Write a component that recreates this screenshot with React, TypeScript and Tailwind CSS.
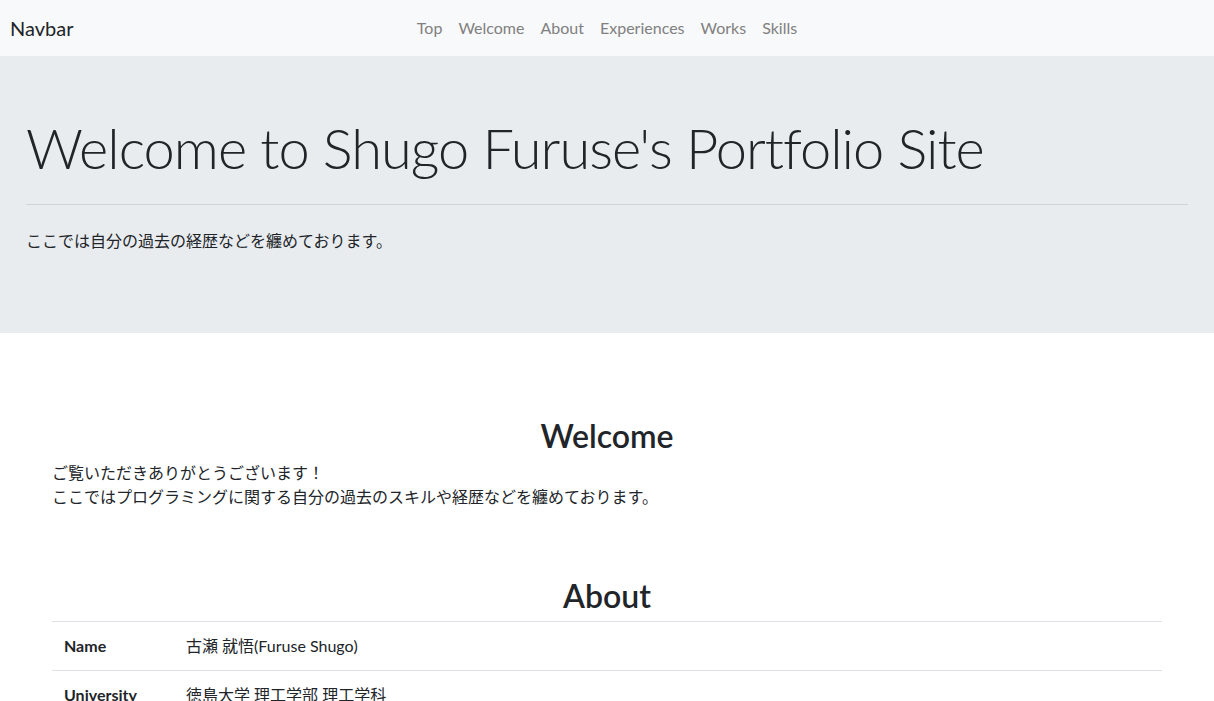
import React from "react";

export default function App() {
  const links = ["Top", "Welcome", "About", "Experiences", "Works", "Skills"];
  return (
    <div className="min-h-screen bg-white text-[#212529] [font-family:'Lato','Noto_Sans_CJK_JP',sans-serif]">
      <nav className="h-14 bg-[#f8f9fa] grid grid-cols-[1fr_auto_1fr] items-center px-[10px]">
        <div className="text-[20px] leading-[30px] text-[#212529]">Navbar</div>
        <ul className="flex items-center gap-4 text-[16px] text-[#808080]">
          {links.map((l) => (
            <li key={l}>{l}</li>
          ))}
        </ul>
        <div />
      </nav>

      <header className="h-[277px] bg-[#e9ecef] px-[26px] pt-[52px]">
        <h1 className="text-[56px] leading-[80px] font-light tracking-[-1px] whitespace-nowrap">
          Welcome to Shugo Furuse's Portfolio Site
        </h1>
        <hr className="mt-[16px] border-t border-[#d2d4d7]" />
        <p className="mt-[24px] text-[16px] leading-6">
          ここでは自分の過去の経歴などを纏めております。
        </p>
      </header>

      <main className="w-[1110px] mx-auto">
        <section className="pt-[84px]">
          <h2 className="text-center text-[32px] leading-[38px] font-semibold mb-[6px]">
            Welcome
          </h2>
          <p className="text-[16px] leading-6">
            ご覧いただきありがとうございます！
            <br />
            ここではプログラミングに関する自分の過去のスキルや経歴などを纏めております。
          </p>
        </section>

        <section className="pt-[68px]">
          <h2 className="text-center text-[32px] leading-[38px] font-semibold mb-[6px]">
            About
          </h2>
          <table className="w-full border-collapse text-[16px] leading-6">
            <tbody>
              <tr className="border-t border-[#dee2e6]">
                <th className="w-[122px] p-3 text-left font-bold">Name</th>
                <td className="p-3">古瀬 就悟(Furuse Shugo)</td>
              </tr>
              <tr className="border-t border-[#dee2e6]">
                <th className="w-[122px] p-3 text-left font-bold">University</th>
                <td className="p-3">徳島大学 理工学部 理工学科</td>
              </tr>
            </tbody>
          </table>
        </section>
      </main>
    </div>
  );
}
